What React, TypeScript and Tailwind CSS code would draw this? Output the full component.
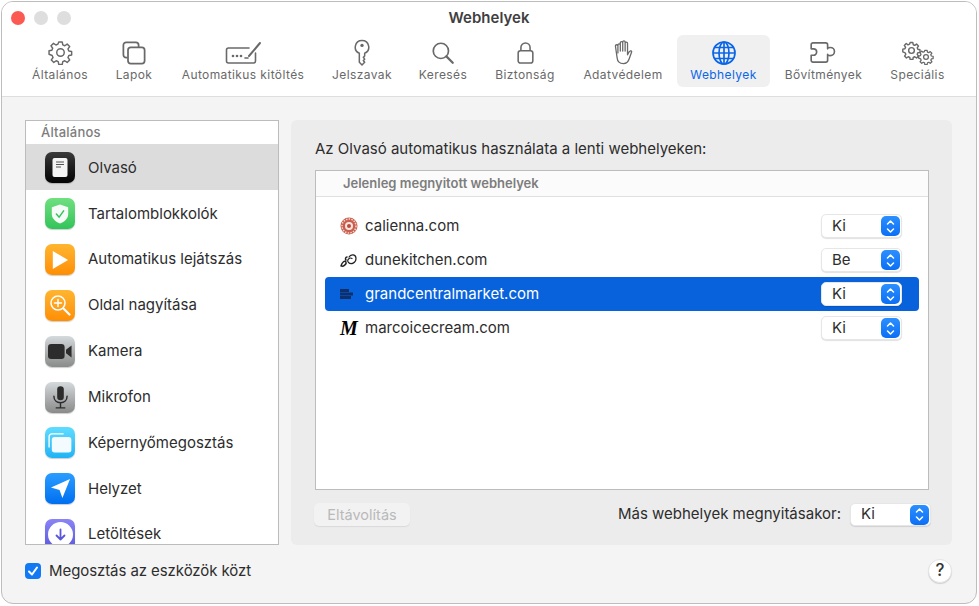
import React from 'react';

const gearPath =
  'M10.3 2h3.4l.5 2.7 1.9.8 2.3-1.6 2.4 2.4-1.6 2.3.8 1.9 2.7.5v3.4l-2.7.5-.8 1.9 1.6 2.3-2.4 2.4-2.3-1.6-1.9.8-.5 2.7h-3.4l-.5-2.7-1.9-.8-2.3 1.6-2.4-2.4 1.6-2.3-.8-1.9L1 13.7v-3.4l2.7-.5.8-1.9-1.6-2.3 2.4-2.4 2.3 1.6 1.9-.8z';

const Gear = ({ size = 26, stroke = 1.4 }: { size?: number; stroke?: number }) => (
  <svg width={size} height={size} viewBox="0 0 24 24" fill="none" stroke="currentColor" strokeWidth={stroke} strokeLinejoin="round">
    <path d={gearPath} />
    <circle cx="12" cy="12" r="3.6" />
  </svg>
);

const TabsIcon = () => (
  <svg width="24" height="24" viewBox="0 0 26 26" fill="none" stroke="currentColor" strokeWidth="1.9">
    <path d="M6 18H4.5A3 3 0 0 1 1.5 15V4.5a3 3 0 0 1 3-3H15a3 3 0 0 1 3 3V7" />
    <rect x="6.500" y="7" width="18" height="17.500" rx="3" />
  </svg>
);

const AutofillIcon = () => (
  <svg width="36" height="26" viewBox="0 0 36 26" fill="none" stroke="currentColor" strokeWidth="1.6" strokeLinecap="round">
    <path d="M24 8H3.500A2 2 0 0 0 1.500 10v11a2 2 0 0 0 2 2h25a2 2 0 0 0 2-2v-8" />
    <path d="M24 16 35 3" strokeWidth="2" />
    <path d="M20 18h3" />
    <circle cx="8" cy="16" r="1.300" fill="currentColor" stroke="none" />
    <circle cx="12" cy="16" r="1.300" fill="currentColor" stroke="none" />
    <circle cx="16" cy="16" r="1.300" fill="currentColor" stroke="none" />
  </svg>
);

const KeyIcon = () => (
  <svg width="16" height="27" viewBox="0 0 18 30" fill="none" stroke="currentColor" strokeWidth="1.7" strokeLinejoin="round">
    <path d="M9 1.500a7.500 7.500 0 0 0-3 14.400V26l3 3 3-3-1.500-2 1.500-1.500-1.500-2 1.500-1.500v-3.100A7.500 7.500 0 0 0 9 1.500z" />
    <circle cx="9" cy="7" r="1.900" fill="currentColor" stroke="none" />
  </svg>
);

const SearchIcon = () => (
  <svg width="22" height="22" viewBox="0 0 26 26" fill="none" stroke="currentColor" strokeWidth="2" strokeLinecap="round">
    <circle cx="10.500" cy="10.500" r="9" />
    <path d="m17 17 7.500 7.500" strokeWidth="2.600" />
  </svg>
);

const LockIcon = () => (
  <svg width="17" height="22" viewBox="0 0 18 24" fill="none" stroke="currentColor" strokeWidth="1.700">
    <rect x="1" y="9.500" width="16" height="13.500" rx="2.500" />
    <path d="M4 9.500V6a5 5 0 0 1 10 0v3.500" />
  </svg>
);

const HandIcon = () => (
  <svg width="20" height="25" viewBox="0 0 21 27" fill="none" stroke="currentColor" strokeWidth="1.400" strokeLinecap="round" strokeLinejoin="round">
    <path d="M5 14V5.500a1.300 1.300 0 0 1 2.600 0M7.600 12V3a1.300 1.300 0 0 1 2.600 0v9M10.200 12V2.300a1.300 1.300 0 0 1 2.600 0V12M12.800 12V3.500a1.300 1.300 0 0 1 2.600 0V16c1-2.500 2-4 3.200-4.300.8-.2 1.500.4 1.200 1.200l-2.300 6.500c-1 3.500-3 6.100-6.500 6.100-4 0-6.500-2-6.800-6L2.300 6.500a1.300 1.300 0 0 1 2.700 0" />
  </svg>
);

const GlobeIcon = () => (
  <svg width="24" height="24" viewBox="0 0 24 24" fill="none" stroke="currentColor" strokeWidth="1.700">
    <circle cx="12" cy="12" r="11" />
    <ellipse cx="12" cy="12" rx="5" ry="11" />
    <path d="M12 1v22M1 12h22M2.600 6.500h18.800M2.600 17.500h18.800" />
  </svg>
);

const PuzzleIcon = () => (
  <svg width="27" height="21" viewBox="0 0 29 23" fill="none" stroke="currentColor" strokeWidth="1.800" strokeLinejoin="round">
    <path d="M3 1h14a2 2 0 0 1 2 2v4.500c0-1 1-1.500 3-1.500a4.500 4.500 0 0 1 0 9c-2 0-3-.5-3-1.500V20a2 2 0 0 1-2 2H3a2 2 0 0 1-2-2v-5.500h2.500a3.500 3.500 0 0 0 0-7H1V3a2 2 0 0 1 2-2z" />
  </svg>
);

const toolbarItems = [
  { label: 'Általános', w: 'w-[74px]', icon: <Gear size={25} /> },
  { label: 'Lapok', w: 'w-[74px]', icon: <TabsIcon /> },
  { label: 'Automatikus kitöltés', w: 'w-[144px]', icon: <AutofillIcon /> },
  { label: 'Jelszavak', w: 'w-[94px]', icon: <KeyIcon /> },
  { label: 'Keresés', w: 'w-[68px]', icon: <SearchIcon /> },
  { label: 'Biztonság', w: 'w-[96px]', icon: <LockIcon /> },
  { label: 'Adatvédelem', w: 'w-[104px] pr-[4px]', icon: <HandIcon /> },
  { label: 'Webhelyek', w: 'w-[93px]', icon: <GlobeIcon />, active: true },
  { label: 'Bővítmények', w: 'w-[107px]', icon: <PuzzleIcon /> },
  {
    label: 'Speciális',
    w: 'w-[81px]',
    icon: (
      <div className="relative w-[32px] h-[24px]">
        <Gear size={19} stroke={1.8} />
        <div className="absolute right-0 bottom-0">
          <Gear size={16} stroke={1.9} />
        </div>
      </div>
    ),
  },
];

const sideItems: { label: string; bg: string; icon: React.ReactNode }[] = [
  {
    label: 'Olvasó',
    bg: 'bg-gradient-to-b from-[#3a3a3a] to-[#050505]',
    icon: (
      <svg width="16" height="19" viewBox="0 0 16 19">
        <rect x="0.500" y="0" width="15" height="19" rx="2" fill="#f5f5f5" />
        <path d="M4 4h8M4 6.500h8M4 9h5" stroke="#555" strokeWidth="1.100" />
      </svg>
    ),
  },
  {
    label: 'Tartalomblokkolók',
    bg: 'bg-gradient-to-b from-[#6fe07f] to-[#2fc45a]',
    icon: (
      <svg width="20" height="22" viewBox="0 0 22 24">
        <path d="M11 1.500 20 4.500v7.500c0 5-4 8.500-9 10.500C6 20.500 2 17 2 12V4.500z" fill="#f6fbf7" />
        <path d="m7 12 3 3.500 5-7" fill="none" stroke="#2fc45a" strokeWidth="1.600" strokeLinecap="round" />
      </svg>
    ),
  },
  {
    label: 'Automatikus lejátszás',
    bg: 'bg-gradient-to-b from-[#ffb52e] to-[#ff8e00]',
    icon: (
      <svg width="18" height="22" viewBox="0 0 20 22">
        <path d="M2 1 19 11 2 21z" fill="#fff" />
      </svg>
    ),
  },
  {
    label: 'Oldal nagyítása',
    bg: 'bg-gradient-to-b from-[#ffb52e] to-[#ff8e00]',
    icon: (
      <svg width="22" height="22" viewBox="0 0 22 22" fill="none" stroke="#fff" strokeWidth="1.500" strokeLinecap="round">
        <circle cx="9" cy="9" r="7" />
        <path d="M9 5.500v7M5.500 9h7" />
        <path d="m14.500 14.500 6 6" strokeWidth="2.200" />
      </svg>
    ),
  },
  {
    label: 'Kamera',
    bg: 'bg-gradient-to-b from-[#d5dadc] to-[#8a8a8a]',
    icon: (
      <svg width="24" height="15" viewBox="0 0 26 16">
        <rect x="0" y="0" width="18" height="16" rx="3.500" fill="#2c2c2c" />
        <path d="m19.500 6 6-4.500v13l-6-4.500z" fill="#2c2c2c" />
      </svg>
    ),
  },
  {
    label: 'Mikrofon',
    bg: 'bg-gradient-to-b from-[#d5dadc] to-[#8a8a8a]',
    icon: (
      <svg width="17" height="25" viewBox="0 0 18 26" fill="none" stroke="#2c2c2c" strokeWidth="1.500" strokeLinecap="round">
        <rect x="5.500" y="1" width="7" height="15" rx="3.500" fill="#2c2c2c" stroke="none" />
        <path d="M2 11.500c0 4.500 3 7 7 7s7-2.500 7-7M9 18.500v5M4.500 24h9" />
      </svg>
    ),
  },
  {
    label: 'Képernyőmegosztás',
    bg: 'bg-gradient-to-b from-[#5fdcff] to-[#1fb3f5]',
    icon: (
      <svg width="24" height="20" viewBox="0 0 26 22">
        <path d="M4 16V4a3 3 0 0 1 3-3h13" fill="none" stroke="#fff" strokeWidth="1.500" transform="translate(-3 0)" />
        <rect x="4" y="4.500" width="21.500" height="17" rx="3" fill="#f3fbff" />
      </svg>
    ),
  },
  {
    label: 'Helyzet',
    bg: 'bg-gradient-to-b from-[#2a9dff] to-[#006ff0]',
    icon: (
      <svg width="21" height="21" viewBox="0 0 22 22">
        <path d="M21 1 1 10l9 2.500L13 21z" fill="#fff" />
      </svg>
    ),
  },
  {
    label: 'Letöltések',
    bg: 'bg-gradient-to-b from-[#8a84f5] to-[#5a55dc]',
    icon: (
      <div className="w-[25px] h-[25px] rounded-full bg-white flex items-center justify-center">
        <svg width="13" height="13" viewBox="0 0 13 13" fill="none" stroke="#5a55dc" strokeWidth="1.800" strokeLinecap="round" strokeLinejoin="round">
          <path d="M6.500 1.500v10M2.500 7.500l4 4 4-4" />
        </svg>
      </div>
    ),
  },
];

const Stepper = () => (
  <div className="w-[19px] h-[20px] rounded-[5px] bg-gradient-to-b from-[#2b8fff] to-[#0a6ff5] flex items-center justify-center">
    <svg width="9" height="15" viewBox="0 0 9 15" fill="none" stroke="#fff" strokeWidth="1.500" strokeLinecap="round" strokeLinejoin="round">
      <path d="M1.500 5 4.500 2l3 3M1.500 10l3 3 3-3" />
    </svg>
  </div>
);

const Select = ({ value, w = 'w-[81px]', h = 'h-[24px]' }: { value: string; w?: string; h?: string }) => (
  <div className={`${w} ${h} bg-white rounded-[5px] border border-[#e6e6e6] shadow-[0_1px_1px_rgba(0,0,0,0.12)] flex items-center justify-between pl-[10px] pr-[1px] text-[15px] text-[#2d2d2d]`}>
    <span>{value}</span>
    <Stepper />
  </div>
);

const CaliennaIcon = () => (
  <svg width="18" height="18" viewBox="0 0 18 18" fill="none" stroke="#bd4a3c">
    <circle cx="9" cy="9" r="8.500" fill="#c9604f" stroke="none" />
    <circle cx="9" cy="9" r="7" strokeWidth="1.500" stroke="#f3d6cf" strokeDasharray="1.500 1.200" />
    <circle cx="9" cy="9" r="4" fill="#f6e4df" stroke="none" />
    <circle cx="9" cy="9" r="2" fill="#bd4a3c" stroke="none" />
  </svg>
);

const DuneIcon = () => (
  <svg width="17" height="16" viewBox="0 0 17 16" fill="none" stroke="#222" strokeWidth="1.200" strokeLinecap="round">
    <path d="M9 5c2-3 7-3 7 1.500S11 13 8.500 10.500 10 5 12 6.500" />
    <path d="M1 14c1-4 4-6 5-4s-3 5-4.500 4M6 8c-1-1-.5-3 1-3" strokeWidth="1.500" />
  </svg>
);

const MarketIcon = () => (
  <svg width="14" height="10" viewBox="0 0 14 10">
    <path d="M0 0h9v3H0zM0 3.500h13V6.500H0zM0 7h11v3H0z" fill="#0d2f6b" />
  </svg>
);

const sites = [
  { name: 'calienna.com', value: 'Ki', icon: <CaliennaIcon /> },
  { name: 'dunekitchen.com', value: 'Be', icon: <DuneIcon /> },
  { name: 'grandcentralmarket.com', value: 'Ki', icon: <MarketIcon />, selected: true },
  {
    name: 'marcoicecream.com',
    value: 'Ki',
    icon: <span className="font-['Liberation_Serif',serif] italic font-bold text-[20px] leading-none text-black">M</span>,
  },
];

export default function App() {
  return (
    <div className="w-[979px] h-[606px] bg-white p-[1px] font-['Inter',sans-serif] overflow-hidden">
      <div className="w-[976px] h-[603px] rounded-[12px] border border-[#bdbdbd] overflow-hidden flex flex-col bg-[#f4f4f4]">
        {/* Title bar and toolbar */}
        <div className="h-[95px] shrink-0 bg-white border-b border-[#dedede] flex flex-col">
          <div className="relative h-[33px] shrink-0 flex items-center justify-center">
            <div className="absolute left-[9px] top-[9px] flex gap-[9px]">
              <div className="w-[14px] h-[14px] rounded-full bg-[#fb5a52]" />
              <div className="w-[14px] h-[14px] rounded-full bg-[#dedede]" />
              <div className="w-[14px] h-[14px] rounded-full bg-[#dedede]" />
            </div>
            <span className="text-[15px] font-semibold text-[#3f3f3f]">Webhelyek</span>
          </div>
          <div className="flex pl-[21px]">
            {toolbarItems.map((item) => (
              <div
                key={item.label}
                className={`${item.w} h-[52px] shrink-0 rounded-[6px] flex flex-col items-center ${item.active ? 'bg-[#f0f0f0] text-[#0a66e8]' : 'text-[#696969]'}`}
              >
                <div className="h-[33px] pt-[2px] flex items-center justify-center">{item.icon}</div>
                <span className="text-[12px] leading-[14px] tracking-[0.4px] whitespace-nowrap">{item.label}</span>
              </div>
            ))}
          </div>
        </div>

        {/* Body */}
        <div className="flex-1 flex flex-col px-[23px] pt-[23px]">
          <div className="flex gap-[12px]">
            <div className="w-[254px] h-[425px] shrink-0 bg-white border border-[#bcbcbc] overflow-hidden">
              <div className="h-[23px] pl-[15px] flex items-center text-[13px] tracking-[0.2px] font-medium text-[#7d7d7d]">Általános</div>
              {sideItems.map((item, i) => (
                <div key={item.label} className={`h-[45.850px] shrink-0 flex items-center pl-[19px] pt-[2px] gap-[13px] ${i === 0 ? 'bg-[#dcdcdc]' : ''}`}>
                  <div className={`w-[30px] h-[31px] shrink-0 rounded-[7px] shadow-[0_1px_1px_rgba(0,0,0,0.2)] flex items-center justify-center ${item.bg}`}>
                    {item.icon}
                  </div>
                  <span className="text-[15px] text-[#2d2d2d]">{item.label}</span>
                </div>
              ))}
            </div>

            <div className="w-[661px] h-[425px] shrink-0 bg-[#ececec] rounded-[6px] pt-[20px] pl-[24px] flex flex-col">
              <div className="text-[15px] leading-[18px] text-[#2d2d2d]">Az Olvasó automatikus használata a lenti webhelyeken:</div>
              <div className="w-[614px] h-[320px] mt-[12px] bg-white border border-[#bcbcbc] flex flex-col">
                <div className="h-[26px] shrink-0 border-b border-[#e0e0e0] bg-[#fbfbfb] pl-[27px] pt-[1px] flex items-center text-[13px] font-semibold text-[#7d7d7d]">
                  Jelenleg megnyitott webhelyek
                </div>
                <div className="pt-[12px] px-[9px]">
                  {sites.map((s) => (
                    <div
                      key={s.name}
                      className={`h-[34px] rounded-[4px] flex items-center justify-between pl-[15px] pr-[17px] ${s.selected ? 'bg-[#0762dc]' : ''}`}
                    >
                      <div className="flex items-center">
                        <div className="w-[25px] flex items-center justify-start">{s.icon}</div>
                        <span className={`text-[15px] ${s.selected ? 'text-white' : 'text-[#2d2d2d]'}`}>{s.name}</span>
                      </div>
                      <Select value={s.value} />
                    </div>
                  ))}
                </div>
              </div>
              <div className="flex items-center justify-between mt-[13px] ml-[-1px] w-[617px]">
                <div className="w-[96px] h-[23px] rounded-[5px] bg-[#f2f2f2] shadow-[0_1px_1px_rgba(0,0,0,0.08)] flex items-center justify-center text-[14.500px] text-[#b9b9b9]">
                  Eltávolítás
                </div>
                <div className="flex items-center gap-[9px]">
                  <span className="text-[15px] text-[#2d2d2d]">Más webhelyek megnyitásakor:</span>
                  <Select value="Ki" w="w-[81px]" h="h-[23px]" />
                </div>
              </div>
            </div>
          </div>

          <div className="flex items-center justify-between mt-[14px] pr-[1px]">
            <div className="flex items-center gap-[8px]">
              <div className="w-[16px] h-[16px] rounded-[4px] bg-[#1279f5] flex items-center justify-center">
                <svg width="12" height="12" viewBox="0 0 12 12" fill="none" stroke="#fff" strokeWidth="2" strokeLinecap="round" strokeLinejoin="round">
                  <path d="m2 6.500 3 3 5-7" />
                </svg>
              </div>
              <span className="text-[15px] tracking-[-0.08px] text-[#2d2d2d]">Megosztás az eszközök közt</span>
            </div>
            <div className="w-[24px] h-[24px] rounded-full bg-white border border-[#e4e4e4] shadow-[0_1px_1px_rgba(0,0,0,0.15)] flex items-center justify-center text-[17px] font-medium text-[#333]">
              ?
            </div>
          </div>
        </div>
      </div>
    </div>
  );
}
